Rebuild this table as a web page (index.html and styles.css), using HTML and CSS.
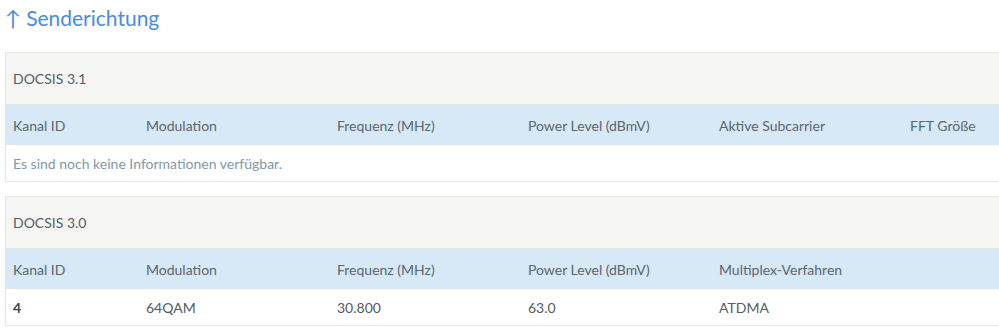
FILE: index.html
```html
<!DOCTYPE html>
<html lang="de">
<head>
<meta charset="utf-8">
<title>Senderichtung</title>
<link rel="stylesheet" href="styles.css">
</head>
<body>
<div class="page">
  <h2 class="title">↑ Senderichtung</h2>

  <section class="panel">
    <div class="panel-head">DOCSIS 3.1</div>
    <div class="row row-head">
      <div class="cell c1">Kanal ID</div>
      <div class="cell">Modulation</div>
      <div class="cell">Frequenz (MHz)</div>
      <div class="cell">Power Level (dBmV)</div>
      <div class="cell">Aktive Subcarrier</div>
      <div class="cell last">FFT Größe</div>
    </div>
    <div class="row row-empty">
      <div class="cell wide">Es sind noch keine Informationen verfügbar.</div>
    </div>
  </section>

  <section class="panel">
    <div class="panel-head">DOCSIS 3.0</div>
    <div class="row row-head">
      <div class="cell c1">Kanal ID</div>
      <div class="cell">Modulation</div>
      <div class="cell">Frequenz (MHz)</div>
      <div class="cell">Power Level (dBmV)</div>
      <div class="cell">Multiplex-Verfahren</div>
    </div>
    <div class="row row-data">
      <div class="cell c1 id">4</div>
      <div class="cell">64QAM</div>
      <div class="cell">30.800</div>
      <div class="cell">63.0</div>
      <div class="cell">ATDMA</div>
    </div>
  </section>
</div>
</body>
</html>
```

FILE: styles.css
```css
html, body {
  margin: 0;
  padding: 0;
  background: #ffffff;
}

.page {
  padding: 0 0 0 5px;
  font-family: Lato, "Noto Sans", sans-serif;
  font-size: 14px;
  color: #5b6671;
}

.title {
  margin: 0;
  height: 40px;
  line-height: 36px;
  font-size: 21px;
  font-weight: 400;
  color: #4a8bdc;
}

.panel {
  border: 1px solid #e4e4e4;
  border-right: none;
  margin: 12px 0 14px 0;
}

.panel-head {
  height: 51px;
  line-height: 51px;
  padding-left: 7px;
  background: #f5f5f4;
  color: #555c63;
  border-bottom: 1px solid #e2e6ea;
}

.row {
  display: flex;
  padding-left: 7px;
}

.row-head {
  height: 40px;
  align-items: center;
  background: #d7e8f6;
}

.row-empty {
  height: 36px;
  align-items: center;
  color: #7f98aa;
}

.row-data {
  height: 36px;
  align-items: center;
  color: #545b62;
}

.cell {
  width: 191px;
  flex: none;
}

.cell.last {
  width: auto;
}

.cell.wide {
  width: auto;
}

.c1 {
  width: 133px;
}

.id {
  font-weight: 700;
  color: #3c4248;
}
```
